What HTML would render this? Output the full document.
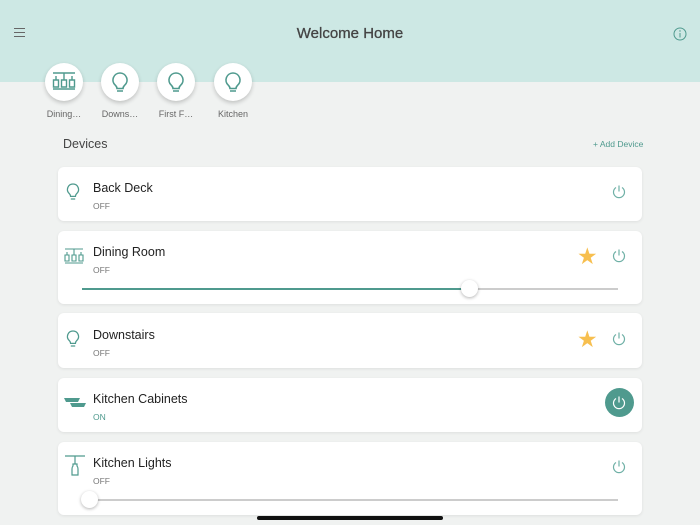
<!DOCTYPE html>
<html><head><style>
*{margin:0;padding:0;box-sizing:border-box}
body{width:700px;height:525px;overflow:hidden;background:#f0f2f1;font-family:"Liberation Sans",sans-serif;position:relative}
.hdr{position:absolute;left:0;top:0;width:700px;height:82px;background:#cde8e4}
.title{position:absolute;left:0;width:700px;top:25px;text-align:center;font-size:15px;color:#444;-webkit-text-stroke:0.3px #444}
.circ{position:absolute;width:38px;height:38px;border-radius:50%;background:#fff;box-shadow:0 2px 4px rgba(0,0,0,.2);top:63px}
.circ svg{position:absolute;left:7px;top:7px}
.lab{position:absolute;top:109px;width:60px;text-align:center;font-size:9px;color:#666}
.card{position:absolute;left:58px;width:584px;background:#fff;border-radius:6px;box-shadow:0 1px 3px rgba(0,0,0,.08)}
.nm{position:absolute;left:35px;font-size:12.5px;color:#222}
.st{position:absolute;left:35px;font-size:8.5px;color:#777}
.ic{position:absolute;left:6px}
.pw{position:absolute;left:553px}
.star{position:absolute;left:519px;color:#f7bf4f;font-size:23px;line-height:1}
.track{position:absolute;height:2px;background:#ccc;left:24px;width:536px}
.thumb{position:absolute;width:17px;height:17px;border-radius:50%;background:#fff;box-shadow:0 1px 3px rgba(0,0,0,.3)}
</style></head><body>
<div class="hdr"></div>
<div style="position:absolute;left:14px;top:28px;width:11px">
<div style="height:1px;background:#666;margin-bottom:3px"></div><div style="height:1px;background:#666;margin-bottom:3px"></div><div style="height:1px;background:#666"></div></div>
<div class="title">Welcome Home</div>
<svg style="position:absolute;left:673px;top:27px" width="14" height="14"><circle cx="7" cy="7" r="6" fill="none" stroke="#4f9a8e" stroke-width="1"/><line x1="7" y1="6" x2="7" y2="10.5" stroke="#4f9a8e"/><circle cx="7" cy="4" r=".7" fill="#4f9a8e"/></svg>

<div class="circ" style="left:45px"><svg width="24" height="24"><g fill="none" stroke="#4f9a8e" stroke-width="1.4"><line x1="1" y1="3" x2="23" y2="3"/><line x1="12" y1="3" x2="12" y2="10"/><line x1="4" y1="6" x2="4" y2="10"/><line x1="20" y1="6" x2="20" y2="10"/><path d="M1.5 10h5v7h-5z M9.5 10h5v7h-5z M17.5 10h5v7h-5z"/><line x1="1" y1="19" x2="23" y2="19"/></g></svg></div>
<div class="circ" style="left:101px"><svg width="24" height="24"><path d="M12 3a7 7 0 0 0-4.7 12.2c1.2 1.2 1.7 2.3 1.7 3.3h6c0-1 .5-2.1 1.7-3.3A7 7 0 0 0 12 3zM9 21h6" fill="none" stroke="#4f9a8e" stroke-width="1.6"/></svg></div>
<div class="circ" style="left:157px"><svg width="24" height="24"><path d="M12 3a7 7 0 0 0-4.7 12.2c1.2 1.2 1.7 2.3 1.7 3.3h6c0-1 .5-2.1 1.7-3.3A7 7 0 0 0 12 3zM9 21h6" fill="none" stroke="#4f9a8e" stroke-width="1.6"/></svg></div>
<div class="circ" style="left:214px"><svg width="24" height="24"><path d="M12 3a7 7 0 0 0-4.7 12.2c1.2 1.2 1.7 2.3 1.7 3.3h6c0-1 .5-2.1 1.7-3.3A7 7 0 0 0 12 3zM9 21h6" fill="none" stroke="#4f9a8e" stroke-width="1.6"/></svg></div>
<div class="lab" style="left:34px">Dining…</div>
<div class="lab" style="left:90px">Downs…</div>
<div class="lab" style="left:146px">First F…</div>
<div class="lab" style="left:203px">Kitchen</div>

<div style="position:absolute;left:63px;top:137px;font-size:12.5px;color:#444">Devices</div>
<div style="position:absolute;left:593px;top:139px;font-size:8.5px;color:#4f9a8e">+ Add Device</div>

<div class="card" style="top:167px;height:54px">
<svg class="ic" style="top:15px" width="18" height="20"><path d="M9 2a5.5 5.5 0 0 0-3.7 9.6c.9.9 1.3 1.8 1.3 2.8h4.8c0-1 .4-1.9 1.3-2.8A5.5 5.5 0 0 0 9 2zM6.8 17h4.4" fill="none" stroke="#4f9a8e" stroke-width="1.3"/></svg>
<div class="nm" style="top:14px">Back Deck</div><div class="st" style="top:34px">OFF</div>
<svg class="pw" style="top:17px" width="16" height="16"><path d="M5 3.5A5.5 5.5 0 1 0 11 3.5M8 1.5v6" fill="none" stroke="#6fb0a6" stroke-width="1.2"/></svg>
</div>
<div class="card" style="top:231px;height:73px">
<svg class="ic" style="top:17px" width="20" height="18"><g fill="none" stroke="#4f9a8e" stroke-width="1.1"><line x1="1" y1="1" x2="19" y2="1"/><line x1="10" y1="1" x2="10" y2="7"/><line x1="3" y1="4" x2="3" y2="7"/><line x1="17" y1="4" x2="17" y2="7"/><path d="M1 7h4v6h-4z M8 7h4v6h-4z M15 7h4v6h-4z"/><line x1="1" y1="15" x2="19" y2="15"/></g></svg>
<div class="nm" style="top:14px">Dining Room</div><div class="st" style="top:34px">OFF</div>
<div class="star" style="top:14px">★</div>
<svg class="pw" style="top:17px" width="16" height="16"><path d="M5 3.5A5.5 5.5 0 1 0 11 3.5M8 1.5v6" fill="none" stroke="#6fb0a6" stroke-width="1.2"/></svg>
<div class="track" style="top:57px"></div><div style="position:absolute;left:24px;top:57px;width:388px;height:2px;background:#4f9a8e"></div>
<div class="thumb" style="left:403px;top:49px"></div>
</div>
<div class="card" style="top:313px;height:55px">
<svg class="ic" style="top:16px" width="18" height="20"><path d="M9 2a5.5 5.5 0 0 0-3.7 9.6c.9.9 1.3 1.8 1.3 2.8h4.8c0-1 .4-1.9 1.3-2.8A5.5 5.5 0 0 0 9 2zM6.8 17h4.4" fill="none" stroke="#4f9a8e" stroke-width="1.3"/></svg>
<div class="nm" style="top:15px">Downstairs</div><div class="st" style="top:35px">OFF</div>
<div class="star" style="top:15px">★</div>
<svg class="pw" style="top:18px" width="16" height="16"><path d="M5 3.5A5.5 5.5 0 1 0 11 3.5M8 1.5v6" fill="none" stroke="#6fb0a6" stroke-width="1.2"/></svg>
</div>
<div class="card" style="top:378px;height:54px">
<svg class="ic" style="top:19px" width="22" height="12"><path d="M0 1h16l-2 4h-12z M6 6h16l-2 4h-12z" fill="#4f9a8e"/></svg>
<div class="nm" style="top:14px">Kitchen Cabinets</div><div class="st" style="top:34px;color:#4f9a8e">ON</div>
<div style="position:absolute;left:547px;top:10px;width:29px;height:29px;border-radius:50%;background:#4f9a8e"></div>
<svg class="pw" style="top:17px" width="16" height="16"><path d="M5 3.5A5.5 5.5 0 1 0 11 3.5M8 1.5v6" fill="none" stroke="#fff" stroke-width="1.2"/></svg>
</div>
<div class="card" style="top:442px;height:73px">
<svg class="ic" style="top:13px" width="22" height="22"><g fill="none" stroke="#4f9a8e" stroke-width="1.2"><line x1="1" y1="1" x2="21" y2="1"/><line x1="11" y1="1" x2="11" y2="9"/><path d="M9 9h4v2c1 1 1 2 1 3v6h-6v-6c0-1 0-2 1-3z"/></g></svg>
<div class="nm" style="top:14px">Kitchen Lights</div><div class="st" style="top:34px">OFF</div>
<svg class="pw" style="top:17px" width="16" height="16"><path d="M5 3.5A5.5 5.5 0 1 0 11 3.5M8 1.5v6" fill="none" stroke="#6fb0a6" stroke-width="1.2"/></svg>
<div class="track" style="top:57px"></div>
<div class="thumb" style="left:23px;top:49px"></div>
</div>
<div style="position:absolute;left:257px;top:516px;width:186px;height:4px;border-radius:2px;background:#111"></div>
</body></html>
